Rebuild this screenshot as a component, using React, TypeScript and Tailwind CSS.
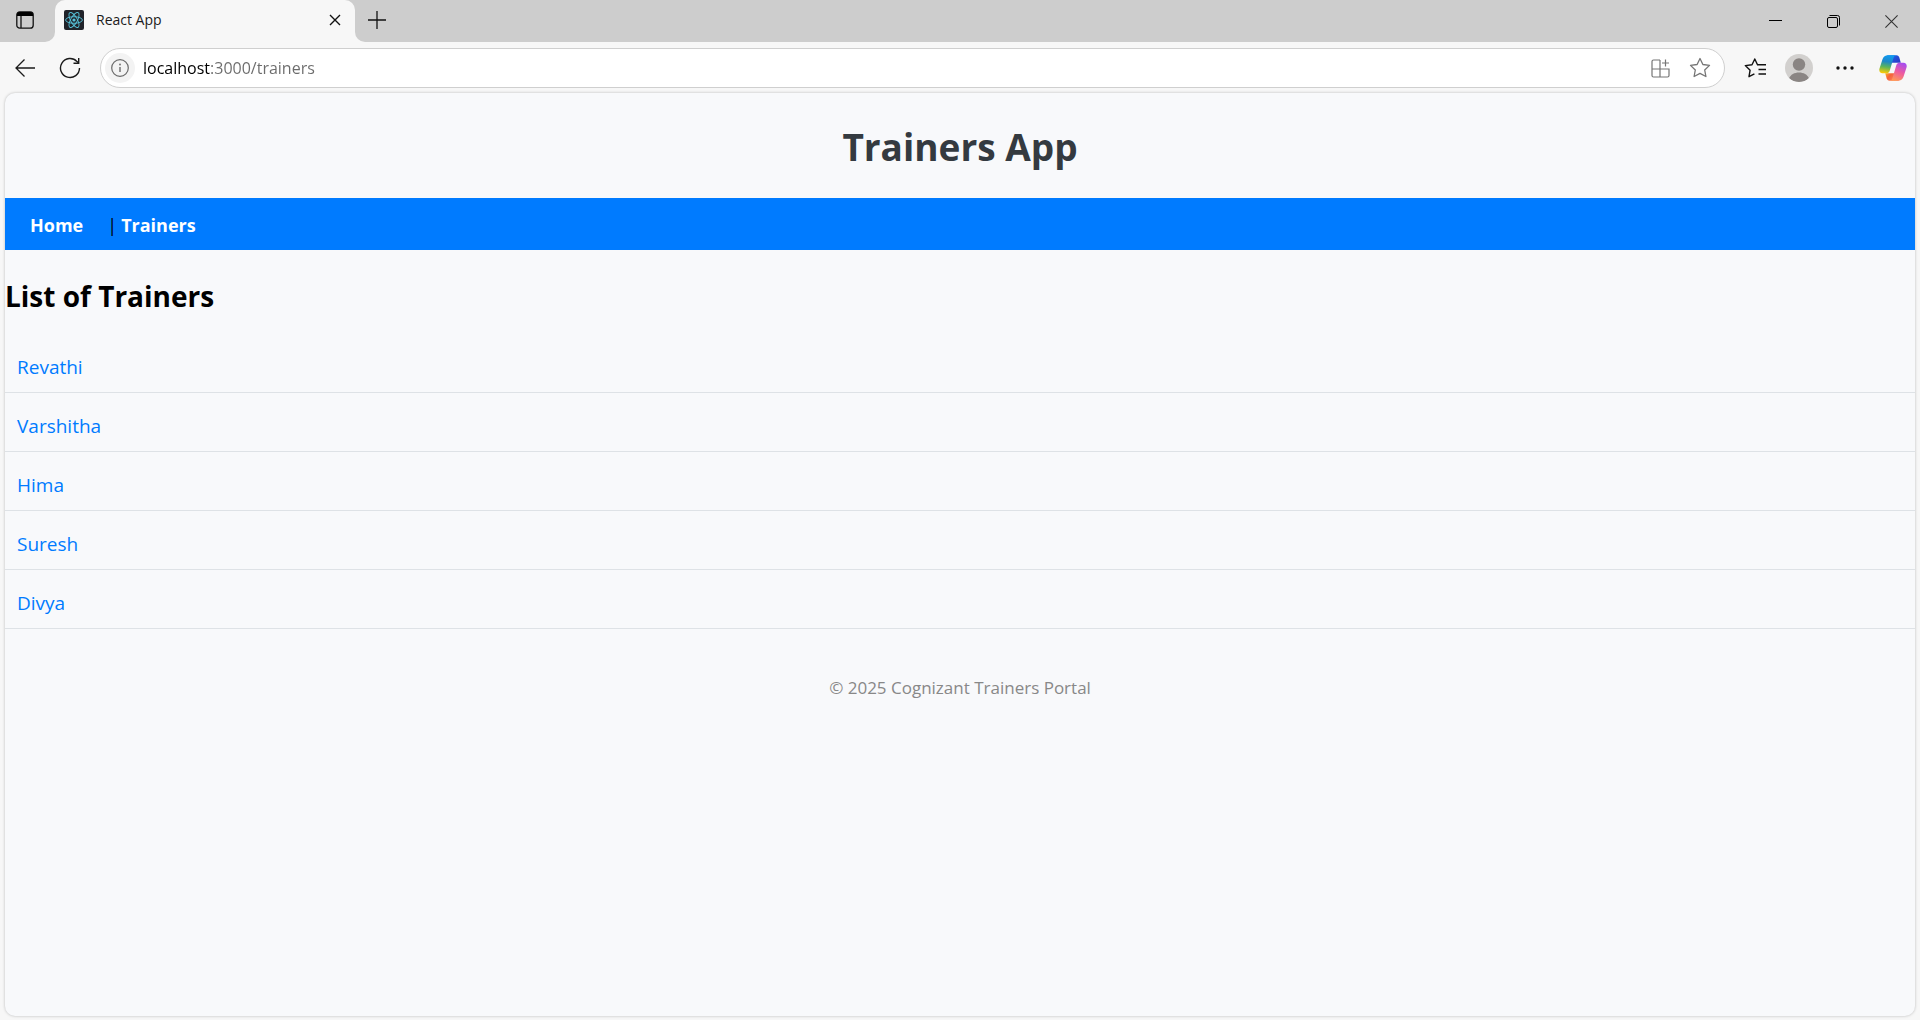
import type { ReactNode } from "react";

const trainers = ["Revathi", "Varshitha", "Hima", "Suresh", "Divya"];

function IconButton({ label, className, children }: { label: string; className: string; children: ReactNode }) {
  return (
    <button type="button" aria-label={label} className={`flex shrink-0 items-center justify-center ${className}`}>
      {children}
    </button>
  );
}

function ReactLogo() {
  return (
    <svg width="20" height="20" viewBox="0 0 20 20" className="shrink-0" aria-hidden="true">
      <rect width="20" height="20" rx="2" fill="#20232a" />
      <g fill="none" stroke="#58c4dc" strokeWidth="0.9">
        <ellipse cx="10" cy="10" rx="8.4" ry="3.3" />
        <ellipse cx="10" cy="10" rx="8.4" ry="3.3" transform="rotate(60 10 10)" />
        <ellipse cx="10" cy="10" rx="8.4" ry="3.3" transform="rotate(120 10 10)" />
      </g>
      <circle cx="10" cy="10" r="1.6" fill="#58c4dc" />
    </svg>
  );
}

function CopilotLogo() {
  return (
    <svg width="28" height="26" viewBox="0 0 28 26" aria-hidden="true">
      <defs>
        <linearGradient id="cp-left" x1="0.5" y1="0" x2="0.35" y2="1">
          <stop offset="0" stopColor="#0f9af0" />
          <stop offset="0.35" stopColor="#1e88c8" />
          <stop offset="0.65" stopColor="#5cb55a" />
          <stop offset="1" stopColor="#ffcb05" />
        </linearGradient>
        <linearGradient id="cp-right" x1="0.7" y1="0" x2="0.3" y2="1">
          <stop offset="0" stopColor="#a64df0" />
          <stop offset="0.5" stopColor="#ee5ba0" />
          <stop offset="1" stopColor="#ff9a55" />
        </linearGradient>
        <linearGradient id="cp-top" x1="0" y1="0" x2="1" y2="0.6">
          <stop offset="0" stopColor="#149cf0" />
          <stop offset="0.6" stopColor="#2350d8" />
          <stop offset="1" stopColor="#2b3fc8" />
        </linearGradient>
        <linearGradient id="cp-bottom" x1="0" y1="0" x2="1" y2="0.5">
          <stop offset="0" stopColor="#ffb020" />
          <stop offset="0.4" stopColor="#f4623a" />
          <stop offset="1" stopColor="#ff8a60" />
        </linearGradient>
      </defs>
      <path d="M8 .3h9.500c1.600 0 2.400.9 2.900 2.500L21.800 7.700H12Z" fill="url(#cp-top)" />
      <path d="M20 25.700h-9.500c-1.600 0-2.400-.9-2.900-2.500L6.200 18.300H16Z" fill="url(#cp-bottom)" />
      <path d="M9 .3h8c-1.500.2-2.100 1.400-2.600 3L10.800 15.500c-.6 1.900-1.500 2.800-3.400 2.800H3.500C.8 18.300-.2 16.200.5 13.500L3.500 4.300C4.400 1.600 6.300.3 9 .3Z" fill="url(#cp-left)" />
      <path d="M19 25.700h-8c1.500-.2 2.100-1.400 2.600-3L17.200 10.500c.6-1.900 1.500-2.800 3.400-2.800h3.900c2.700 0 3.700 2.100 3 4.800l-3 9.200c-.9 2.700-2.800 4-5.500 4Z" fill="url(#cp-right)" />
    </svg>
  );
}

function TabStrip() {
  return (
    <div className="flex h-[42px]">
      <div className="flex w-[55px] shrink-0 rounded-br-[10px] bg-[#cdcdcd] pl-4">
        <IconButton label="Tab actions" className="h-10 w-[18px]">
          <svg width="18" height="18" viewBox="0 0 18 18" aria-hidden="true">
            <rect x="0.8" y="0.8" width="16.400" height="16.400" rx="3" fill="none" stroke="#111" strokeWidth="1.300" />
            <path d="M1 5V3.500A2.500 2.500 0 0 1 3.500 1h11A2.500 2.500 0 0 1 17 3.500V5Z" fill="#000" />
            <path d="M5 5v12" stroke="#111" strokeWidth="1.300" />
          </svg>
        </IconButton>
      </div>
      <div className="w-[300px] shrink-0 bg-linear-to-b from-[#cdcdcd] from-50% to-[#f7f7f7] to-50%">
        <div className="flex h-full items-start rounded-t-[10px] bg-[#f7f7f7] pr-[10px] pl-[9px]">
          <div className="flex h-10 w-full items-center">
            <ReactLogo />
            <span className="ml-3 flex-1 text-[14px] leading-5 text-[#1b1b1b]">React App</span>
            <IconButton label="Close tab" className="size-5">
              <svg width="12" height="12" viewBox="0 0 12 12" aria-hidden="true">
                <path d="m1 1 10 10M11 1 1 11" stroke="#111" strokeWidth="1.400" />
              </svg>
            </IconButton>
          </div>
        </div>
      </div>
      <div className="flex flex-1 justify-between rounded-bl-[10px] bg-[#cdcdcd]">
        <IconButton label="New tab" className="h-10 w-11">
          <svg width="18" height="18" viewBox="0 0 18 18" aria-hidden="true">
            <path d="M9 0v18M0 9h18" stroke="#111" strokeWidth="1.300" />
          </svg>
        </IconButton>
        <div className="flex">
          <IconButton label="Minimize" className="h-[42px] w-[58px]">
            <svg width="14" height="14" viewBox="0 0 14 14" aria-hidden="true">
              <path d="M1 6.500h13" stroke="#000" />
            </svg>
          </IconButton>
          <IconButton label="Restore" className="h-[42px] w-[58px]">
            <svg width="13" height="13" viewBox="0 0 13 13" fill="none" stroke="#000" aria-hidden="true">
              <rect x="0.5" y="2.500" width="10" height="10" rx="1.500" />
              <path d="M2.500.5h8a2 2 0 0 1 2 2v8" />
            </svg>
          </IconButton>
          <IconButton label="Close" className="h-[42px] w-[58px]">
            <svg width="13" height="13" viewBox="0 0 13 13" aria-hidden="true">
              <path d="m.4.4 12.200 12.200M12.600.4.4 12.600" stroke="#333" strokeWidth="1.100" />
            </svg>
          </IconButton>
        </div>
      </div>
    </div>
  );
}

function Toolbar() {
  return (
    <div className="flex h-[50px] items-center pt-0.5 pr-[13px] pl-[15px]">
      <IconButton label="Back" className="size-5">
        <svg width="20" height="18" viewBox="0 0 20 18" fill="none" stroke="#1b1b1b" strokeWidth="1.300" aria-hidden="true">
          <path d="M20 9H1M9.500.5 1 9l8.500 8.500" />
        </svg>
      </IconButton>
      <IconButton label="Refresh" className="ml-[23px] size-6">
        <svg width="22" height="22" viewBox="0 0 22 22" fill="none" stroke="#1b1b1b" strokeWidth="1.400" aria-hidden="true">
          <path d="M20.500 11a9.500 9.500 0 1 1-2.500-6.400L19.600 6" />
          <path d="M19.700 1v5.200h-5.200" />
        </svg>
      </IconButton>
      <div className="ml-[18px] flex h-10 flex-1 items-center rounded-full border border-[#cfcfcf] bg-white pr-3 pl-1">
        <IconButton label="View site information" className="size-[30px] rounded-full bg-[#f3f3f3]">
          <svg width="18" height="18" viewBox="0 0 18 18" fill="none" stroke="#6a6a6a" aria-hidden="true">
            <circle cx="9" cy="9" r="8.300" strokeWidth="1.200" />
            <path d="M9 8v5" strokeWidth="1.400" />
            <circle cx="9" cy="5.500" r="0.9" fill="#6a6a6a" stroke="none" />
          </svg>
        </IconButton>
        <input
          type="text"
          aria-label="Address"
          defaultValue="localhost:3000/trainers"
          className="ml-2 min-w-0 flex-1 bg-linear-to-r from-black from-[68px] to-[#6b6b6b] to-[68px] bg-clip-text text-[16px] leading-6 text-transparent outline-none"
        />
        <IconButton label="Apps" className="size-6">
          <svg width="19" height="19" viewBox="0 0 19 19" fill="none" stroke="#757575" strokeWidth="1.200" aria-hidden="true">
            <path d="M9 1H2.500A1.500 1.500 0 0 0 1 2.500v14A1.500 1.500 0 0 0 2.500 18h14a1.500 1.500 0 0 0 1.500-1.500V10H1M9 1v17M14.500.5v7M11 4h7" />
          </svg>
        </IconButton>
        <IconButton label="Add to favorites" className="ml-4 size-6">
          <svg width="22" height="22" viewBox="0 0 22 22" fill="none" stroke="#757575" strokeWidth="1.300" strokeLinejoin="round" aria-hidden="true">
            <path d="m11 1.500 2.900 6 6.600.9-4.800 4.600 1.200 6.500-5.900-3.100-5.900 3.100 1.200-6.500L1.500 8.400l6.600-.9Z" />
          </svg>
        </IconButton>
      </div>
      <IconButton label="Favorites" className="ml-[18px] size-6">
        <svg width="22" height="20" viewBox="0 0 22 20" fill="none" stroke="#111" strokeWidth="1.400" strokeLinejoin="round" aria-hidden="true">
          <path d="M14.500 6.700h-1L10.800 1 8 6.700l-6.700.9 4.800 4.600-1.100 6.500 5.400-2.900M13 6.700h9M14.500 11.500H22M14.500 16H22" />
        </svg>
      </IconButton>
      <IconButton label="Profile" className="ml-[18px] size-7 overflow-hidden rounded-full bg-[#d2d0ce]">
        <svg width="28" height="28" viewBox="0 0 28 28" fill="#8a8583" aria-hidden="true">
          <circle cx="14" cy="10.500" r="6.200" />
          <path d="M4 24.500C5.500 20.500 9.500 18.500 14 18.500s8.500 2 10 6C21.500 27 18 28 14 28S6.500 27 4 24.500Z" />
        </svg>
      </IconButton>
      <IconButton label="Settings and more" className="ml-5 size-6">
        <svg width="18" height="4" viewBox="0 0 18 4" fill="#111" aria-hidden="true">
          <circle cx="2" cy="2" r="1.700" />
          <circle cx="9" cy="2" r="1.700" />
          <circle cx="16" cy="2" r="1.700" />
        </svg>
      </IconButton>
      <IconButton label="Copilot" className="ml-[22px] size-7">
        <CopilotLogo />
      </IconButton>
    </div>
  );
}

export default function App() {
  return (
    <div className="flex min-h-screen flex-col bg-[#f7f7f7] font-['Open_Sans','Noto_Sans',sans-serif]">
      <TabStrip />
      <Toolbar />
      <main className="mx-[5px] mt-px mb-1 flex-1 overflow-hidden rounded-[10px] bg-[#f8f9fb] shadow-[0_0_3px_rgba(0,0,0,0.25)]">
        <h1 className="pt-[27px] pb-[24px] text-center text-[37px] leading-[54px] font-bold text-[#343a40]">Trainers App</h1>
        <nav className="flex h-[52px] items-center bg-[#007bff] pt-0.5 pl-[25px] text-[18px] leading-7 font-bold text-white">
          <a href="#home">Home</a>
          <span className="mr-1 ml-6 font-normal text-black">|</span>
          <a href="#trainers">Trainers</a>
        </nav>
        <h2 className="mt-[26px] text-[28px] leading-10 font-bold text-black">List of Trainers</h2>
        <ul className="mt-[18px]">
          {trainers.map((name) => (
            <li key={name} className="h-[59px] border-b border-[#dee2e6] px-3 pt-[19px] text-[19px] leading-7">
              <a href={`#${name}`} className="text-[#007bff]">{name}</a>
            </li>
          ))}
        </ul>
        <footer className="mt-[47px] pb-8 text-center text-[17px] leading-6 text-[#888888]">© 2025 Cognizant Trainers Portal</footer>
      </main>
    </div>
  );
}
